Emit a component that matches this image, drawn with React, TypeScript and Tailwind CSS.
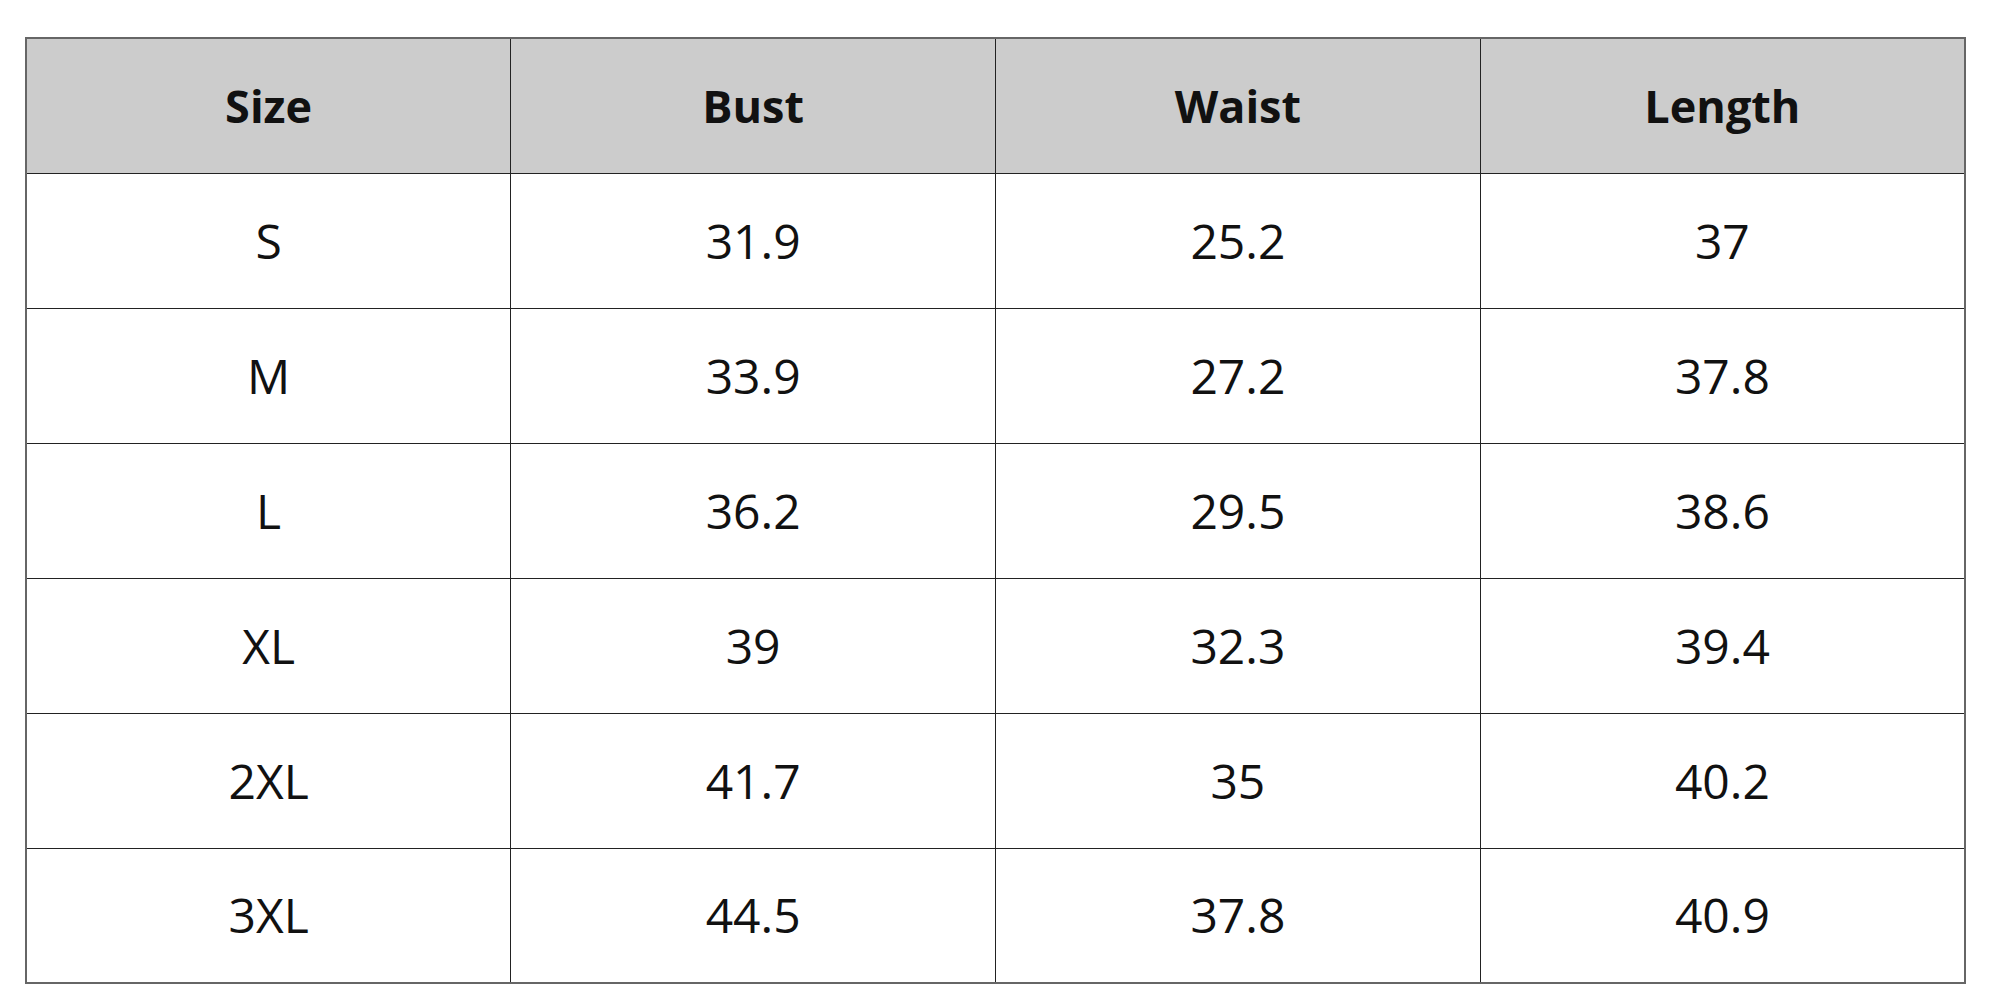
const headers = ['Size', 'Bust', 'Waist', 'Length']

const rows: string[][] = [
  ['S', '31.9', '25.2', '37'],
  ['M', '33.9', '27.2', '37.8'],
  ['L', '36.2', '29.5', '38.6'],
  ['XL', '39', '32.3', '39.4'],
  ['2XL', '41.7', '35', '40.2'],
  ['3XL', '44.5', '37.8', '40.9'],
]

export default function App() {
  return (
    <div className="w-[2000px] h-[1000px] bg-white pt-[37px] pl-[25px] font-['Open_Sans',sans-serif] text-[#111]">
      <table className="w-[1941px] table-fixed border-collapse border-2 border-[#666]">
        <thead>
          <tr className="h-[135px] bg-[#cccccc]">
            {headers.map(h => (
              <th key={h} className="border border-[#222] text-[45px] font-bold text-center align-middle p-0">
                {h}
              </th>
            ))}
          </tr>
        </thead>
        <tbody>
          {rows.map(r => (
            <tr key={r[0]} className="h-[135px]">
              {r.map((c, i) => (
                <td key={i} className="border border-[#222] text-[48px] font-normal text-center align-middle p-0">
                  {c}
                </td>
              ))}
            </tr>
          ))}
        </tbody>
      </table>
    </div>
  )
}
